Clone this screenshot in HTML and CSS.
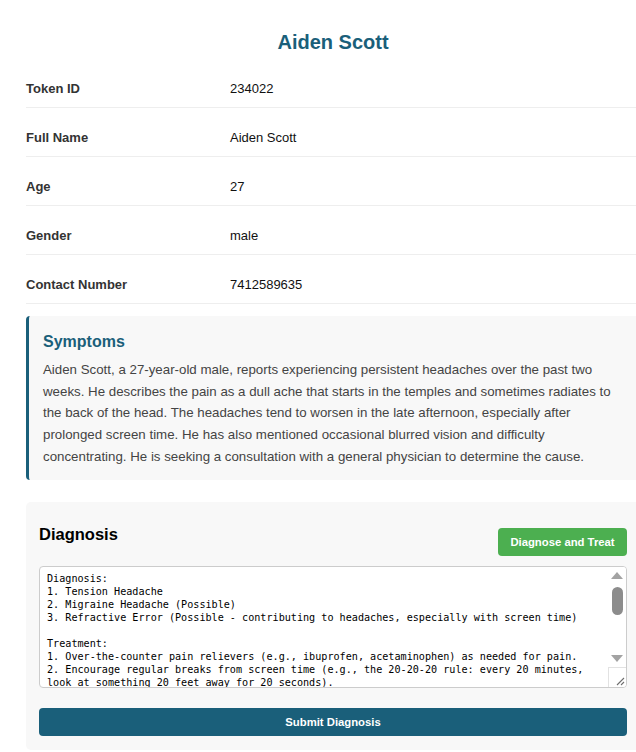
FILE: index.html
```html
<!DOCTYPE html>
<html lang="en">
<head>
<meta charset="utf-8">
<title>Aiden Scott</title>
<link rel="stylesheet" href="styles.css">
</head>
<body>
<div class="page">
  <h2 class="title">Aiden Scott</h2>

  <div class="info">
    <div class="row"><div class="label">Token ID</div><div class="value">234022</div></div>
    <div class="row"><div class="label">Full Name</div><div class="value">Aiden Scott</div></div>
    <div class="row"><div class="label">Age</div><div class="value">27</div></div>
    <div class="row"><div class="label">Gender</div><div class="value">male</div></div>
    <div class="row"><div class="label">Contact Number</div><div class="value">7412589635</div></div>
  </div>

  <div class="symptoms">
    <h3 class="symptoms-title">Symptoms</h3>
    <p class="symptoms-text">Aiden Scott, a 27-year-old male, reports experiencing persistent headaches over the past two weeks. He describes the pain as a dull ache that starts in the temples and sometimes radiates to the back of the head. The headaches tend to worsen in the late afternoon, especially after prolonged screen time. He has also mentioned occasional blurred vision and difficulty concentrating. He is seeking a consultation with a general physician to determine the cause.</p>
  </div>

  <div class="diagnosis">
    <div class="diag-head">
      <h3 class="diag-title">Diagnosis</h3>
      <button class="btn-treat" type="button">Diagnose and Treat</button>
    </div>
    <div class="ta-wrap">
      <textarea class="diag-text" spellcheck="false">Diagnosis:
1. Tension Headache
2. Migraine Headache (Possible)
3. Refractive Error (Possible - contributing to headaches, especially with screen time)

Treatment:
1. Over-the-counter pain relievers (e.g., ibuprofen, acetaminophen) as needed for pain.
2. Encourage regular breaks from screen time (e.g., the 20-20-20 rule: every 20 minutes, look at something 20 feet away for 20 seconds).
3. Ensure proper posture and ergonomic workstation setup to reduce neck and shoulder tension.
4. Maintain adequate hydration and regular sleep schedule.
5. Stress management techniques (e.g., relaxation exercises, mindfulness).
6. Refer to an optometrist for a comprehensive eye examination to rule out refractive error.

Follow-up:
1. Keep a headache diary noting frequency, duration, triggers and severity.
2. Return in 2 weeks, or sooner if symptoms worsen.
3. Seek immediate care if sudden severe headache, vision loss, weakness or confusion occurs.</textarea>
      <div class="fake-scroll" aria-hidden="true">
        <span class="arrow-up"></span>
        <span class="thumb"></span>
        <span class="arrow-down"></span>
      </div>
      <div class="resizer" aria-hidden="true">
        <svg width="18" height="20" viewBox="0 0 18 20">
          <line x1="16" y1="11" x2="9" y2="18" stroke="#6e6e6e" stroke-width="1.1"/>
          <line x1="16" y1="15" x2="13" y2="18" stroke="#6e6e6e" stroke-width="1.1"/>
        </svg>
      </div>
    </div>
    <button class="btn-submit" type="button">Submit Diagnosis</button>
  </div>
</div>
</body>
</html>
```

FILE: styles.css
```css
html, body {
  margin: 0;
  padding: 0;
  background: #ffffff;
  overflow: hidden;
}

body {
  font-family: "Liberation Sans", Arial, sans-serif;
  color: #333333;
}

.page {
  width: 614px;
  margin-left: 26px;
  padding-top: 30px;
}

.title {
  margin: 0 0 17px;
  text-align: center;
  font-size: 20px;
  line-height: 24px;
  font-weight: bold;
  color: #1a5f7a;
}

.row {
  display: flex;
  padding: 10px 0;
  margin-bottom: 12px;
  border-bottom: 1px solid #eeeeee;
  font-size: 13px;
  line-height: 16px;
}

.label {
  width: 204px;
  flex: none;
  font-weight: bold;
  color: #333333;
}

.value {
  color: #111111;
}

.symptoms {
  margin-top: 12px;
  background: #f8f8f8;
  border-left: 3px solid #1a5f7a;
  border-radius: 4px 0 0 4px;
  padding: 16px 15px 12px 14px;
}

.symptoms-title {
  margin: 0 0 8px;
  font-size: 16px;
  line-height: 19px;
  font-weight: bold;
  color: #1a5f7a;
}

.symptoms-text {
  margin: 0;
  font-size: 13.3px;
  line-height: 21.7px;
  color: #444444;
}

.diagnosis {
  margin-top: 22px;
  background: #f8f8f8;
  border-radius: 5px;
  padding: 23px 13px 14px;
}

.diag-head {
  display: flex;
  justify-content: space-between;
  align-items: flex-start;
}

.diag-title {
  margin: 0;
  font-size: 16.5px;
  line-height: 19px;
  font-weight: bold;
  color: #000000;
}

.btn-treat {
  margin-top: 3px;
  width: 129px;
  height: 28px;
  padding: 0;
  border: none;
  border-radius: 4px;
  background: #4caf50;
  color: #ffffff;
  font-family: "Liberation Sans", Arial, sans-serif;
  font-size: 11.3px;
  font-weight: bold;
}

.ta-wrap {
  position: relative;
  margin-top: 10px;
}

.diag-text {
  display: block;
  box-sizing: border-box;
  width: 100%;
  height: 122px;
  margin: 0;
  padding: 5px 25px 5px 7px;
  border: 1px solid #cccccc;
  border-radius: 4px;
  background: #ffffff;
  font-family: "DejaVu Sans Mono", "Liberation Mono", monospace;
  font-size: 10.15px;
  line-height: 13px;
  color: #000000;
  resize: none;
  overflow: hidden;
}

.fake-scroll {
  position: absolute;
  top: 1px;
  right: 1px;
  width: 18px;
  height: 101px;
  box-sizing: border-box;
  padding: 5px 0 6px;
  display: flex;
  flex-direction: column;
  align-items: center;
  justify-content: space-between;
  background: #ffffff;
  border-top-right-radius: 3px;
}

.arrow-up {
  width: 0;
  height: 0;
  border-left: 6.5px solid transparent;
  border-right: 6.5px solid transparent;
  border-bottom: 7px solid #a3a3a3;
}

.thumb {
  width: 11px;
  height: 28px;
  margin-top: 8px;
  border-radius: 6px;
  background: #8c8c8c;
}

.arrow-down {
  margin-top: auto;
  width: 0;
  height: 0;
  border-left: 6.5px solid transparent;
  border-right: 6.5px solid transparent;
  border-top: 7px solid #a3a3a3;
}

.resizer {
  position: absolute;
  right: 1px;
  bottom: 1px;
  width: 18px;
  height: 20px;
  box-sizing: border-box;
  border-top: 1px solid #e2e2e2;
  border-left: 1px solid #e2e2e2;
  background: #ffffff;
  border-bottom-right-radius: 3px;
}

.resizer svg {
  display: block;
  position: absolute;
  right: 0;
  bottom: 0;
}

.btn-submit {
  display: block;
  width: 100%;
  height: 28px;
  margin-top: 20px;
  border: none;
  border-radius: 4px;
  background: #1a5f7a;
  color: #ffffff;
  font-family: "Liberation Sans", Arial, sans-serif;
  font-size: 11.3px;
  font-weight: bold;
}
```
